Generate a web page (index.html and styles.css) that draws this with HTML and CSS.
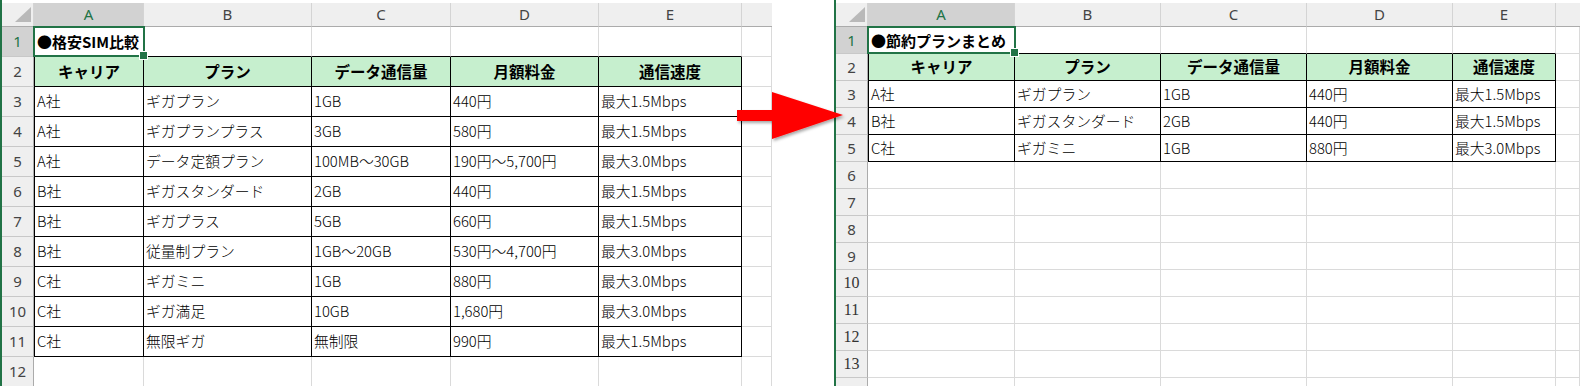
FILE: index.html
```html
<!DOCTYPE html>
<html lang="ja">
<head>
<meta charset="utf-8">
<title>格安SIM比較</title>
<link rel="stylesheet" href="styles.css">
</head>
<body>
<section class="sheet sheet-left">
  <div class="grid grid-left">
    <div class="c ch corner"><span class="tri"></span></div>
    <div class="c ch sel">A</div><div class="c ch">B</div><div class="c ch">C</div><div class="c ch">D</div><div class="c ch">E</div><div class="c ch last"></div>

    <div class="c rh sel">1</div>
    <div class="c tt title t1"><span>●格安SIM比較</span><i class="selbox"></i></div><div class="c tt"></div><div class="c tt"></div><div class="c tt"></div><div class="c tt"></div><div class="c"></div>

    <div class="c rh">2</div>
    <div class="c t tl th">キャリア</div><div class="c t th">プラン</div><div class="c t th">データ通信量</div><div class="c t th">月額料金</div><div class="c t th">通信速度</div><div class="c"></div>

    <div class="c rh">3</div>
    <div class="c t tl">A社</div><div class="c t">ギガプラン</div><div class="c t">1GB</div><div class="c t">440円</div><div class="c t">最大1.5Mbps</div><div class="c"></div>

    <div class="c rh">4</div>
    <div class="c t tl">A社</div><div class="c t">ギガプランプラス</div><div class="c t">3GB</div><div class="c t">580円</div><div class="c t">最大1.5Mbps</div><div class="c"></div>

    <div class="c rh">5</div>
    <div class="c t tl">A社</div><div class="c t">データ定額プラン</div><div class="c t">100MB～30GB</div><div class="c t">190円～5,700円</div><div class="c t">最大3.0Mbps</div><div class="c"></div>

    <div class="c rh">6</div>
    <div class="c t tl">B社</div><div class="c t">ギガスタンダード</div><div class="c t">2GB</div><div class="c t">440円</div><div class="c t">最大1.5Mbps</div><div class="c"></div>

    <div class="c rh">7</div>
    <div class="c t tl">B社</div><div class="c t">ギガプラス</div><div class="c t">5GB</div><div class="c t">660円</div><div class="c t">最大1.5Mbps</div><div class="c"></div>

    <div class="c rh">8</div>
    <div class="c t tl">B社</div><div class="c t">従量制プラン</div><div class="c t">1GB～20GB</div><div class="c t">530円～4,700円</div><div class="c t">最大3.0Mbps</div><div class="c"></div>

    <div class="c rh">9</div>
    <div class="c t tl">C社</div><div class="c t">ギガミニ</div><div class="c t">1GB</div><div class="c t">880円</div><div class="c t">最大3.0Mbps</div><div class="c"></div>

    <div class="c rh">10</div>
    <div class="c t tl">C社</div><div class="c t">ギガ満足</div><div class="c t">10GB</div><div class="c t">1,680円</div><div class="c t">最大3.0Mbps</div><div class="c"></div>

    <div class="c rh">11</div>
    <div class="c t tl">C社</div><div class="c t">無限ギガ</div><div class="c t">無制限</div><div class="c t">990円</div><div class="c t">最大1.5Mbps</div><div class="c"></div>

    <div class="c rh">12</div>
    <div class="c"></div><div class="c"></div><div class="c"></div><div class="c"></div><div class="c"></div><div class="c"></div>
  </div>
</section>

<section class="sheet sheet-right">
  <div class="grid grid-right">
    <div class="c ch corner"><span class="tri"></span></div>
    <div class="c ch sel">A</div><div class="c ch">B</div><div class="c ch">C</div><div class="c ch">D</div><div class="c ch">E</div><div class="c ch last"></div>

    <div class="c rh sel">1</div>
    <div class="c tt title t2"><span>●節約プランまとめ</span><i class="selbox"></i></div><div class="c tt"></div><div class="c tt"></div><div class="c tt"></div><div class="c tt"></div><div class="c"></div>

    <div class="c rh">2</div>
    <div class="c t tl th">キャリア</div><div class="c t th">プラン</div><div class="c t th">データ通信量</div><div class="c t th">月額料金</div><div class="c t th">通信速度</div><div class="c"></div>

    <div class="c rh">3</div>
    <div class="c t tl">A社</div><div class="c t">ギガプラン</div><div class="c t">1GB</div><div class="c t">440円</div><div class="c t">最大1.5Mbps</div><div class="c"></div>

    <div class="c rh">4</div>
    <div class="c t tl">B社</div><div class="c t">ギガスタンダード</div><div class="c t">2GB</div><div class="c t">440円</div><div class="c t">最大1.5Mbps</div><div class="c"></div>

    <div class="c rh">5</div>
    <div class="c t tl">C社</div><div class="c t">ギガミニ</div><div class="c t">1GB</div><div class="c t">880円</div><div class="c t">最大3.0Mbps</div><div class="c"></div>

    <div class="c rh">6</div>
    <div class="c"></div><div class="c"></div><div class="c"></div><div class="c"></div><div class="c"></div><div class="c"></div>
    <div class="c rh">7</div>
    <div class="c"></div><div class="c"></div><div class="c"></div><div class="c"></div><div class="c"></div><div class="c"></div>
    <div class="c rh">8</div>
    <div class="c"></div><div class="c"></div><div class="c"></div><div class="c"></div><div class="c"></div><div class="c"></div>
    <div class="c rh">9</div>
    <div class="c"></div><div class="c"></div><div class="c"></div><div class="c"></div><div class="c"></div><div class="c"></div>
    <div class="c rh narrow">10</div>
    <div class="c"></div><div class="c"></div><div class="c"></div><div class="c"></div><div class="c"></div><div class="c"></div>
    <div class="c rh narrow">11</div>
    <div class="c"></div><div class="c"></div><div class="c"></div><div class="c"></div><div class="c"></div><div class="c"></div>
    <div class="c rh narrow">12</div>
    <div class="c"></div><div class="c"></div><div class="c"></div><div class="c"></div><div class="c"></div><div class="c"></div>
    <div class="c rh narrow">13</div>
    <div class="c"></div><div class="c"></div><div class="c"></div><div class="c"></div><div class="c"></div><div class="c"></div>
    <div class="c rh"></div>
    <div class="c"></div><div class="c"></div><div class="c"></div><div class="c"></div><div class="c"></div><div class="c"></div>
  </div>
</section>

<svg class="arrow" width="120" height="62" viewBox="0 0 120 62" aria-hidden="true">
  <defs>
    <filter id="sh" x="-20%" y="-30%" width="140%" height="160%">
      <feDropShadow dx="1.5" dy="2" stdDeviation="1.5" flood-color="#000" flood-opacity="0.35"/>
    </filter>
  </defs>
  <polygon points="7,25 42,25 42,7 113,30 42,54 42,36 7,36" fill="#ff0000" filter="url(#sh)"/>
</svg>
</body>
</html>
```

FILE: styles.css
```css
* {
  box-sizing: border-box;
  margin: 0;
  padding: 0;
}

html, body {
  width: 1580px;
  height: 386px;
  overflow: hidden;
  background: #ffffff;
}

body {
  display: flex;
  position: relative;
  font-family: "Noto Sans CJK JP", "Noto Sans", sans-serif;
  color: #000000;
}

.sheet {
  height: 386px;
  overflow: hidden;
  border-left: 2px solid #217346;
  padding-top: 3px;
  flex: none;
}

.sheet-left {
  width: 772px;
}

.sheet-right {
  width: 746px;
  margin-left: 62px;
}

.grid {
  display: grid;
}

.grid-left {
  grid-template-columns: 32px 110px 168px 139px 148px 143px 30px;
  grid-template-rows: 24px repeat(12, 30px);
}

.grid-right {
  grid-template-columns: 32px 147px 146px 146px 146px 103px 24px;
  grid-template-rows: 24px repeat(14, 27px);
}

.c {
  display: flex;
  align-items: center;
  padding: 0 2px;
  border-right: 1px solid #dadada;
  border-bottom: 1px solid #dadada;
  font-size: 14.8px;
  font-weight: 300;
  line-height: 1;
  white-space: nowrap;
}

.ch {
  background: #efefef;
  border-right-color: #d4d4d4;
  border-bottom-color: #ababab;
  justify-content: center;
  color: #444444;
  font-family: "Noto Sans", "Noto Sans CJK JP", sans-serif;
  font-size: 15px;
  font-weight: 400;
}

.ch.last {
  border-right: none;
}

.rh {
  background: #efefef;
  border-right-color: #ababab;
  border-bottom-color: #c8c8c8;
  justify-content: center;
  color: #444444;
  font-family: "Noto Sans", "Noto Sans CJK JP", sans-serif;
  font-size: 15px;
  font-weight: 400;
}

.rh.narrow {
  font-family: "Liberation Serif", serif;
  font-size: 16px;
  color: #333333;
}

.sel {
  background: #d2d2d2;
  color: #217346;
}

.corner {
  justify-content: flex-end;
  align-items: flex-end;
  padding: 0 2px 4px 0;
}

.tri {
  display: block;
  width: 16px;
  height: 15px;
  background: #b9b9b9;
  clip-path: polygon(100% 0, 100% 100%, 0 100%);
}

.t {
  border-right-color: #000000;
  border-bottom-color: #000000;
}

.tl {
  border-left: 1px solid #000000;
}

.tt {
  border-bottom-color: #000000;
}

.th {
  background: #c6efce;
  font-weight: bold;
  justify-content: center;
  font-size: 15.5px;
}

.title {
  position: relative;
  z-index: 2;
  font-weight: bold;
  font-size: 15px;
  padding-left: 3px;
}

.selbox {
  position: absolute;
  left: -1px;
  top: -1px;
  right: -2px;
  bottom: -1px;
  border: 2px solid #217346;
}

.selbox::after {
  content: "";
  position: absolute;
  right: -5px;
  bottom: -5px;
  width: 7px;
  height: 7px;
  background: #217346;
  border: 1px solid #ffffff;
}

.arrow {
  position: absolute;
  left: 730px;
  top: 85px;
  overflow: visible;
}
```
